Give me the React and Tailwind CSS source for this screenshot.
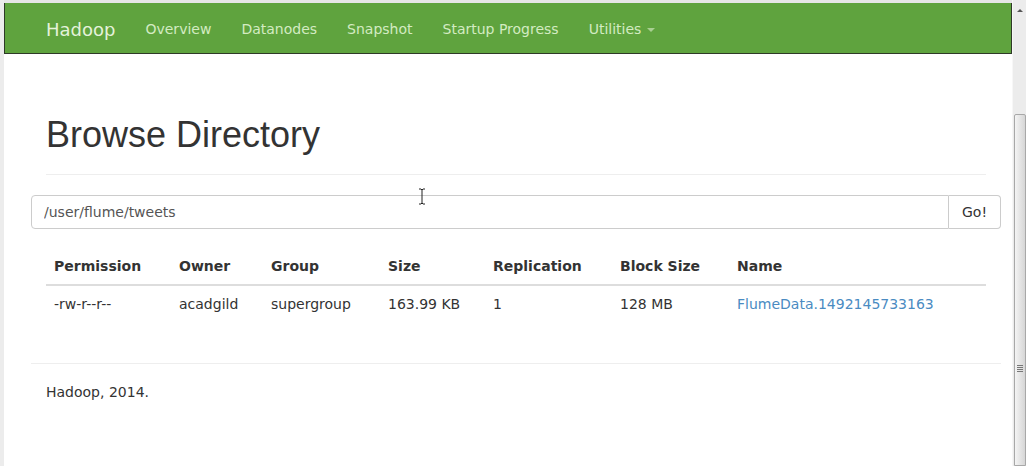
const navLinks = ["Overview", "Datanodes", "Snapshot", "Startup Progress"];

const columns = [
  { label: "Permission", w: "w-[125px]" },
  { label: "Owner", w: "w-[92px]" },
  { label: "Group", w: "w-[117px]" },
  { label: "Size", w: "w-[105px]" },
  { label: "Replication", w: "w-[127px]" },
  { label: "Block Size", w: "w-[117px]" },
  { label: "Name", w: "" },
];

const Navbar = () => (
  <div className="h-[51px] bg-[#5fa33e] border-l border-r border-b border-[#2e3a28]">
    <div className="w-[940px] ml-[41px] h-full flex items-center pt-[2px]">
      <span className="text-[18px] text-[#e4f2da] pr-[15px]">Hadoop</span>
      {navLinks.map((l) => (
        <span key={l} className="px-[15px] text-[14px] text-[#d3ebc2]">
          {l}
        </span>
      ))}
      <span className="px-[15px] text-[14px] text-[#d3ebc2] flex items-center">
        Utilities
        <span className="ml-[6px] mt-[2px] w-0 h-0 border-l-[4px] border-r-[4px] border-t-[4px] border-l-transparent border-r-transparent border-t-[#a9cf92]" />
      </span>
    </div>
  </div>
);

const Scrollbar = () => (
  <div className="w-[14px] h-full bg-[#ececec] border-l border-[#f7f7f7] flex flex-col">
    <div className="h-[114px] flex justify-center pt-[9px]">
      <span className="w-0 h-0 border-l-[3px] border-r-[3px] border-b-[3px] border-l-transparent border-r-transparent border-b-[#555]" />
    </div>
    <div className="flex-1 ml-[1px] rounded-t-[2px] border border-[#a8a8a8] bg-gradient-to-r from-[#f4f4f4] to-[#d6d6d6] flex flex-col items-center pt-[250px]">
      <div className="w-[6px] flex flex-col gap-[1px]">
        <div className="h-[1px] bg-[#777]" />
        <div className="h-[1px] bg-[#777]" />
        <div className="h-[1px] bg-[#777]" />
        <div className="h-[1px] bg-[#777]" />
      </div>
    </div>
  </div>
);

export default function App() {
  return (
    <div className="w-[1026px] h-[466px] overflow-hidden flex bg-white font-['DejaVu_Sans',sans-serif] text-[#333] relative">
      <div className="w-[4px] h-full bg-[#ececec]" />
      <div className="flex-1 flex flex-col">
        <div className="h-[3px] bg-[#e6e6e6]" />
        <Navbar />
        <div className="w-[970px] ml-[27px]">
          <div className="mx-[15px] mt-[61px] pb-[19px] border-b border-[#eee] mb-[20px]">
            <h1 className="font-['Liberation_Sans',Arial,sans-serif] text-[36px] leading-[40px] text-[#333]">
              Browse Directory
            </h1>
          </div>
          <div className="flex h-[34px]">
            <input
              readOnly
              defaultValue="/user/flume/tweets"
              className="flex-1 border border-[#ccc] rounded-l-[4px] px-[12px] text-[14px] text-[#555] outline-none font-['DejaVu_Sans',sans-serif]"
            />
            <div className="w-[52px] border border-l-0 border-[#ccc] rounded-r-[4px] flex items-center justify-center text-[14px] text-[#333]">
              Go!
            </div>
          </div>
          <div className="mx-[15px] mt-[19px]">
            <table className="w-full table-fixed text-[14px] leading-[20px]">
              <thead>
                <tr className="border-b-2 border-[#ddd]">
                  {columns.map((c) => (
                    <th key={c.label} className={`${c.w} text-left font-bold p-[8px]`}>
                      {c.label}
                    </th>
                  ))}
                </tr>
              </thead>
              <tbody>
                <tr>
                  <td className="p-[8px]">-rw-r--r--</td>
                  <td className="p-[8px]">acadgild</td>
                  <td className="p-[8px]">supergroup</td>
                  <td className="p-[8px]">163.99 KB</td>
                  <td className="p-[8px]">1</td>
                  <td className="p-[8px]">128 MB</td>
                  <td className="p-[8px] text-[#4a8bc2]">FlumeData.1492145733163</td>
                </tr>
              </tbody>
            </table>
          </div>
          <div className="mt-[41px] border-t border-[#eee]" />
          <div className="px-[15px] pt-[18px] text-[14px]">Hadoop, 2014.</div>
        </div>
      </div>
      <Scrollbar />
      <svg className="absolute left-[418px] top-[188px]" width="8" height="17" viewBox="0 0 8 17">
        <path d="M1 1h2l1 1 1-1h2M4 2v13M1 16h2l1-1 1 1h2" fill="none" stroke="#222" strokeWidth="1" />
      </svg>
    </div>
  );
}
